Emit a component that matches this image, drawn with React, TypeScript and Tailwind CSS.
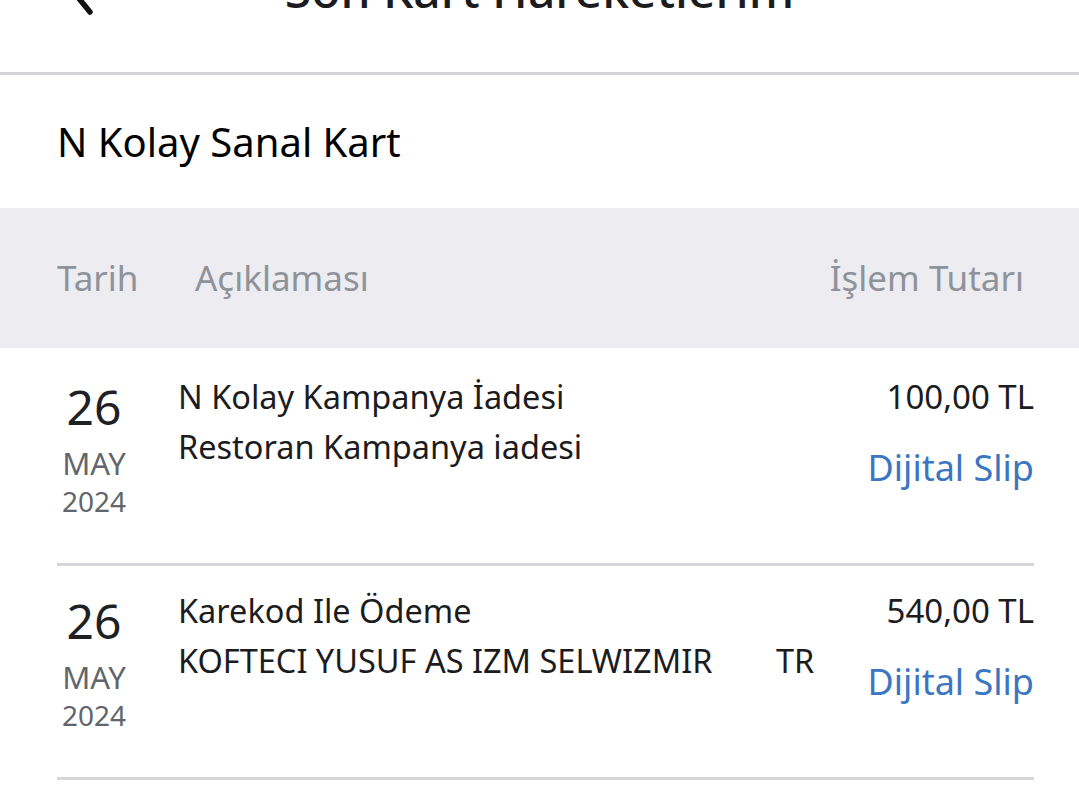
import React from "react"

interface Movement {
  day: string
  month: string
  year: string
  title: string
  detail: string
  country?: string
  amount: string
}

const movements: Movement[] = [
  {
    day: "26",
    month: "MAY",
    year: "2024",
    title: "N Kolay Kampanya İadesi",
    detail: "Restoran Kampanya iadesi",
    amount: "100,00 TL",
  },
  {
    day: "26",
    month: "MAY",
    year: "2024",
    title: "Karekod Ile Ödeme",
    detail: "KOFTECI YUSUF AS IZM SELWIZMIR",
    country: "TR",
    amount: "540,00 TL",
  },
]

function MovementRow({ m }: { m: Movement }) {
  return (
    <div className="flex border-b-[3px] border-[#d6d7db] h-[214px] pt-[20px]">
      <div className="w-[121px] flex flex-col items-center pr-[47px] mt-[5px]">
        <span className="text-[48px] leading-[60px] text-[#202124]">{m.day}</span>
        <span className="text-[31px] leading-[36px] text-[#62666b] mt-[8px]">{m.month}</span>
        <span className="text-[28px] leading-[40px] text-[#62666b]">{m.year}</span>
      </div>
      <div className="flex-1 flex flex-col text-[32.5px] text-[#1c1c1e] leading-[50px]">
        <span>{m.title}</span>
        <div className="flex">
          <span className="w-[598px]">{m.detail}</span>
          {m.country && <span>{m.country}</span>}
        </div>
      </div>
      <div className="flex flex-col items-end">
        <span className="text-[33px] leading-[50px] text-[#1c1c1e]">{m.amount}</span>
        <span className="text-[36px] leading-[56px] text-[#3b76c3] mt-[18px]">Dijital Slip</span>
      </div>
    </div>
  )
}

export default function App() {
  return (
    <div className="w-[1079px] h-[801px] bg-white overflow-hidden font-['Noto_Sans',sans-serif]">
      <header className="h-[75px] border-b-[3px] border-[#d3d4d8] overflow-hidden">
        <div className="flex items-center h-[60px] -mt-[40px] px-[60px]">
          <svg width="40" height="60" viewBox="0 0 40 60" fill="none" className="shrink-0">
            <path d="M32 8 L12 30 L30 52" stroke="#111" strokeWidth="5.5" strokeLinecap="round" strokeLinejoin="round" />
          </svg>
          <h1 className="flex-1 text-center text-[48px] leading-[60px] font-medium text-[#1c1c1e] pr-[40px]">
            Son Kart Hareketlerim
          </h1>
        </div>
      </header>

      <div className="h-[133px] flex items-center px-[57px]">
        <h2 className="text-[40px] text-black">N Kolay Sanal Kart</h2>
      </div>

      <div className="h-[140px] bg-[#ececf1] flex items-center pl-[57px] pr-[55px] text-[35px] text-[#8e939a]">
        <span className="w-[138px]">Tarih</span>
        <span className="flex-1">Açıklaması</span>
        <span>İşlem Tutarı</span>
      </div>

      <div className="pl-[57px] pr-[45px] pt-[4px]">
        {movements.map((m, i) => (
          <MovementRow key={i} m={m} />
        ))}
      </div>
    </div>
  )
}
